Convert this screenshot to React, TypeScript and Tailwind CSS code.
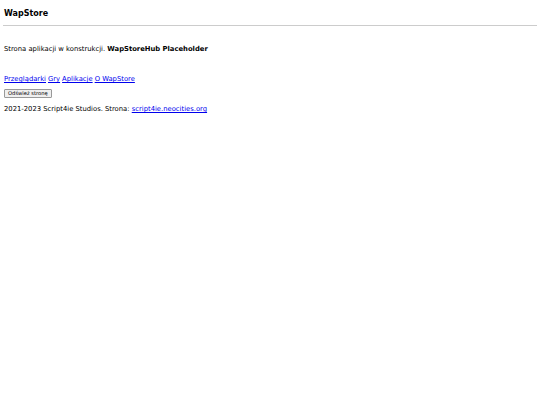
export default function App() {
  return (
    <div
      className="min-h-[405px] bg-white px-[4px] text-[6.8px] leading-[9px] text-black"
      style={{ fontFamily: '"DejaVu Sans", Verdana, sans-serif' }}
    >
      <h1 className="pt-[9px] text-[8px] leading-[10px] font-bold">WapStore</h1>
      <hr className="mx-[-1px] mt-[6px] border-t border-[#cccccc]" />

      <p className="mt-[19px]">
        Strona aplikacji w konstrukcji. <b>WapStoreHub Placeholder</b>
      </p>

      <nav className="mt-[21px] flex gap-[2px] text-[#0000ee]">
        <a href="#" className="underline">Przeglądarki</a>
        <a href="#" className="underline">Gry</a>
        <a href="#" className="underline">Aplikacje</a>
        <a href="#" className="underline">O WapStore</a>
      </nav>

      <button className="mt-[5px] block h-[9px] rounded-[1px] border border-[#999999] bg-[#efefef] px-[3px] text-[5.2px] leading-[7px]">
        Odśwież stronę
      </button>

      <p className="mt-[7px]">
        2021-2023 Script4ie Studios. Strona:{' '}
        <a href="#" className="text-[#0000ee] underline">script4ie.neocities.org</a>
      </p>
    </div>
  );
}
